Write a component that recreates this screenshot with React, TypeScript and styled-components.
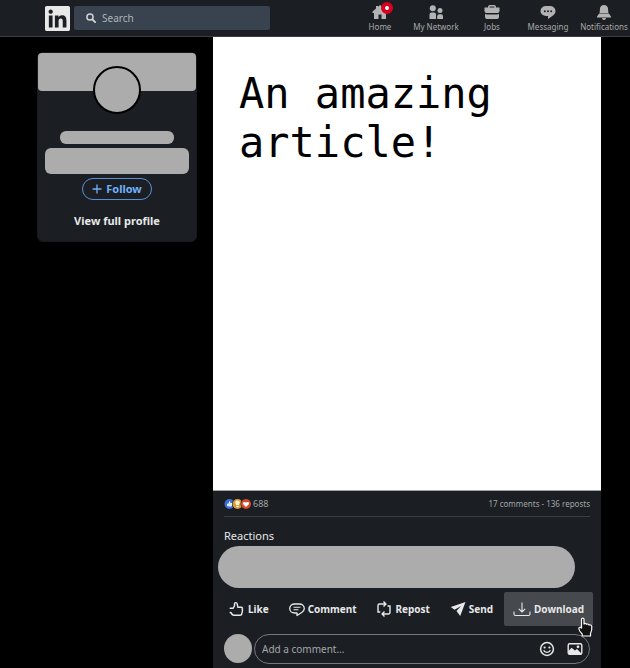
import React from "react";
import styled, { createGlobalStyle } from "styled-components";
import { FaLinkedin } from "react-icons/fa";

const GlobalStyle = createGlobalStyle`
  *, *::before, *::after { box-sizing: border-box; }
  body {
    margin: 0;
    background: #000;
    color: #e8e8e8;
    font-family: "Noto Sans", sans-serif;
    font-size: 10px;
    overflow-x: hidden;
  }
  button, input { font: inherit; color: inherit; }
  button { background: none; border: 0; padding: 0; cursor: pointer; }
  a { color: inherit; text-decoration: none; }
  h1, p { margin: 0; }
  svg { display: block; flex: none; }
`;

const Page = styled.div`
  min-height: 100vh;
  display: flex;
  flex-direction: column;
`;

const Header = styled.header`
  height: 37px;
  flex: none;
  display: flex;
  align-items: center;
  gap: 4px;
  padding-left: 45px;
  background: #1b1f23;
  border-bottom: 1px solid #3a3f43;
`;

const LogoLink = styled.a`
  color: #e9e9e9;
  svg { width: 25px; height: 29px; }
`;

const SearchBox = styled.label`
  display: flex;
  align-items: center;
  gap: 6px;
  width: 196px;
  height: 24px;
  padding: 0 12px;
  border-radius: 2px;
  background: #38434f;
  color: #d0d2d4;
`;

const SearchInput = styled.input`
  flex: 1;
  min-width: 0;
  padding: 0;
  border: 0;
  outline: 0;
  background: none;
  &::placeholder { color: #b0b4b8; opacity: 1; }
`;

const Nav = styled.nav`
  display: flex;
  flex: none;
  align-self: stretch;
  margin-left: auto;
  margin-right: -2px;
`;

const NavLink = styled.a`
  width: 56px;
  display: flex;
  flex-direction: column;
  align-items: center;
  padding-top: 4px;
  gap: 1px;
  font-size: 8px;
  line-height: 12px;
  color: #b3b3b3;
`;

const NavIcon = styled.span`
  position: relative;
`;

const NavLinkText = styled.span`
  white-space: nowrap;
  color: #a9a9a9;
`;

const Badge = styled.span`
  position: absolute;
  top: -2px;
  right: -5px;
  width: 12px;
  height: 12px;
  border: 4px solid #d9001f;
  border-radius: 50%;
  background: #fff;
`;

const Columns = styled.div`
  flex: 1;
  display: grid;
  grid-template-columns: 160px minmax(0, 1fr);
  gap: 16px;
  padding: 0 29px 0 37px;
`;

const ProfileCard = styled.aside`
  align-self: start;
  margin-top: 15px;
  display: flex;
  flex-direction: column;
  align-items: center;
  padding-bottom: 12px;
  border: 1px solid #17191c;
  border-radius: 6px;
  background: #1b1f23;
`;

const Cover = styled.div`
  align-self: stretch;
  height: 38px;
  border-radius: 4px;
  background: #acacac;
`;

const ProfilePhoto = styled.div`
  width: 48px;
  height: 48px;
  margin-top: -25px;
  border: 2px solid #000;
  border-radius: 50%;
  background: #acacac;
`;

const Placeholder = styled.div<{ $width: number; $height: number; $top: number }>`
  width: ${(p) => p.$width}px;
  height: ${(p) => p.$height}px;
  margin-top: ${(p) => p.$top}px;
  border-radius: 6px;
  background: #acacac;
`;

const FollowButton = styled.button`
  display: flex;
  align-items: center;
  justify-content: center;
  gap: 4px;
  width: 70px;
  height: 22px;
  margin-top: 4px;
  border: 1px solid #5a8fd6;
  border-radius: 11px;
  color: #71b0fb;
  font-size: 11px;
  font-weight: 700;
  line-height: 14px;
`;

const ProfileLink = styled.a`
  margin-top: 13px;
  font-size: 11px;
  font-weight: 700;
  line-height: 16px;
`;

const Post = styled.main`
  display: flex;
  flex-direction: column;
`;

const Article = styled.article`
  flex: 1;
  padding: 32px 26px;
  background: #fff;
  color: #000;
  border-bottom: 1px solid #9da3a3;
`;

const ArticleTitle = styled.h1`
  font: 400 42px/49px "DejaVu Sans Mono", monospace;
`;

const Social = styled.section`
  padding: 0 11px 4px;
  background: #1b1f23;
`;

const Counts = styled.div`
  display: flex;
  align-items: center;
  justify-content: space-between;
  height: 26px;
  border-bottom: 1px solid #3b3f43;
  font-size: 8px;
  color: #a0a3a5;
`;

const ReactionCount = styled.a`
  display: flex;
  align-items: center;
  gap: 1px;
  font-size: 9px;
`;

const ReactionsTitle = styled.p`
  margin-top: 11px;
  font-size: 11px;
  line-height: 16px;
`;

const ReactionStrip = styled.div`
  height: 42px;
  margin: 2px 15px 0 -6px;
  border-radius: 21px;
  background: #acacac;
`;

const Actions = styled.div`
  display: flex;
  justify-content: space-between;
  margin: 4px -3px 0 -4px;
`;

const ActionButton = styled.button<{ $active?: boolean }>`
  display: flex;
  align-items: center;
  gap: 3px;
  height: 34px;
  padding: 0 9px;
  border-radius: 2px;
  background: ${(p) => (p.$active ? "#46494d" : "transparent")};
  font-weight: 700;
`;

const ActiveAction = styled.div`
  position: relative;
`;

const Pointer = styled.svg`
  position: absolute;
  right: 0;
  bottom: -11px;
  pointer-events: none;
`;

const CommentRow = styled.div`
  display: flex;
  gap: 2px;
  margin-top: 8px;
`;

const Avatar = styled.div`
  width: 28px;
  height: 29px;
  border-radius: 50%;
  background: #acacac;
`;

const CommentBox = styled.div`
  flex: 1;
  min-width: 0;
  display: flex;
  align-items: center;
  gap: 12px;
  height: 30px;
  padding: 0 6px 0 7px;
  border: 1px solid #75787b;
  border-radius: 15px;
`;

const CommentInput = styled.input`
  flex: 1;
  min-width: 0;
  padding: 0;
  border: 0;
  outline: 0;
  background: none;
  &::placeholder { color: #a3a6a9; opacity: 1; }
`;

const HomeIcon = () => (
  <svg width="16" height="16" viewBox="0 0 16 16" fill="currentColor">
    <path d="M8 1 15.500 7.500V9H14v6h-4.500v-4.500h-3V15H2V9H.5V7.500L4 4.500V2h2v.8Z" />
  </svg>
);

const NetworkIcon = () => (
  <svg width="16" height="16" viewBox="0 0 16 16" fill="currentColor">
    <circle cx="4.800" cy="4.300" r="3" />
    <path d="M1.500 15v-4.500a2 2 0 0 1 2-2H6a2 2 0 0 1 2 2V15Z" />
    <circle cx="12" cy="6.600" r="2.500" />
    <path d="M9.200 15v-2.800a2 2 0 0 1 2-2H13a2 2 0 0 1 2 2V15Z" />
  </svg>
);

const JobsIcon = () => (
  <svg width="16" height="16" viewBox="0 0 16 16" fill="currentColor">
    <path fillRule="evenodd" d="M4 3.500V3a2 2 0 0 1 2-2h4a2 2 0 0 1 2 2v.5h3.500V7a2 2 0 0 1-2 2h-11a2 2 0 0 1-2-2V3.500Zm1.500 0h5V3a.6.6 0 0 0-.6-.6H6.100a.6.6 0 0 0-.6.6Z" />
    <path d="M1 9.800c.5.4 1 .6 1.700.6h10.600c.7 0 1.200-.2 1.700-.6V13a2 2 0 0 1-2 2H3a2 2 0 0 1-2-2Z" />
  </svg>
);

const MessagingIcon = () => (
  <svg width="16" height="16" viewBox="0 0 16 16">
    <path fill="currentColor" d="M6 2h4a5.500 5 0 0 1 5.500 5c0 2-1 3.300-2.500 4.500L8 15v-3H6A5.500 5 0 0 1 .5 7 5.500 5 0 0 1 6 2Z" />
    <g fill="#1b1f23">
      <circle cx="4.800" cy="7.300" r="1" />
      <circle cx="8" cy="7.300" r="1" />
      <circle cx="11.200" cy="7.300" r="1" />
    </g>
  </svg>
);

const BellIcon = () => (
  <svg width="16" height="16" viewBox="0 0 16 16" fill="currentColor">
    <path d="M8 1c2.300 0 3.800 1.400 4 3.500l.4 4.500H3.600L4 4.500C4.200 2.400 5.700 1 8 1ZM3.200 9.600h9.600l2.200 3v.9H1v-.9ZM6 14h4a2 2 0 0 1-4 0Z" />
  </svg>
);

const SearchIcon = () => (
  <svg width="10" height="10" viewBox="0 0 10 10" fill="none" stroke="currentColor">
    <circle cx="4" cy="4" r="3.100" strokeWidth="1.500" />
    <path d="m6.300 6.300 2.800 2.800" strokeWidth="1.900" strokeLinecap="round" />
  </svg>
);

const PlusIcon = () => (
  <svg width="10" height="10" viewBox="0 0 10 10" stroke="currentColor" strokeWidth="1.300">
    <path d="M5 .5v9M.5 5h9" />
  </svg>
);

const ReactionIcons = () => (
  <svg width="28" height="12" viewBox="0 0 28 12">
    <circle cx="5.500" cy="6" r="5" fill="#3c6fd4" />
    <path fill="#dcebff" d="M3 5.800h1.300L5.500 3c1 0 1.100.7.700 2h1.900c.6 0 .7.8.3 1.200.3.500.1.900-.2 1.100 0 .6-.3 1.200-1 1.200H5L3 8Z" />
    <circle cx="13.500" cy="6" r="5.500" fill="#1b1f23" />
    <circle cx="13.500" cy="6" r="5" fill="#d99a38" />
    <path fill="#fff0cc" d="M13.500 2.500c1.800 0 2.600 1.300 2.200 2.800-.2.700-.7 1-.8 1.700h-2.800c-.1-.7-.6-1-.8-1.700-.4-1.500.4-2.800 2.200-2.800Zm-1.200 5.200h2.400v1.500h-2.400Z" />
    <circle cx="22" cy="6" r="5.500" fill="#1b1f23" />
    <circle cx="22" cy="6" r="5" fill="#d6492a" />
    <path fill="#fff" d="M22 9 19.200 6.200c-1-1.200.2-2.700 1.600-2.200.6.2.9.5 1.200.8.3-.3.600-.6 1.200-.8 1.400-.5 2.600 1 1.600 2.200Z" />
  </svg>
);

const LikeIcon = () => (
  <svg width="16" height="16" viewBox="0 0 16 16" fill="none" stroke="currentColor" strokeWidth="1.400" strokeLinejoin="round" strokeLinecap="round">
    <path d="M1.200 7.200h3L5.500 5V2.800c0-1.600 2.300-1.600 2.700 0l.6 3.400h3.400c1.400 0 1.500 1.400.9 2 .7.700.6 1.600.1 2.100.3.700.1 1.300-.3 1.700 0 1.500-.8 2.200-2 2.200H5.200c-1.500 0-2.500-.8-2.800-2.200L1.200 11.500" />
  </svg>
);

const CommentIcon = () => (
  <svg width="16" height="16" viewBox="0 0 16 16" fill="none" stroke="currentColor" strokeWidth="1.300" strokeLinejoin="round">
    <path d="M5.700 3h4.600a5 4.500 0 0 1 5 4.500c0 2-1 3-2.600 4L8 14.500V12H5.700a5 4.500 0 0 1 0-9Z" />
    <path d="M4.500 6.300h7M4.500 8.800h5" strokeWidth="1.100" />
  </svg>
);

const RepostIcon = () => (
  <svg width="16" height="16" viewBox="0 0 16 16" fill="none" stroke="currentColor" strokeWidth="1.400">
    <path d="M2 11V4.500A1.500 1.500 0 0 1 3.500 3h6M7.500.6 9.900 3 7.500 5.400M1.300 11h3M14 5v6.500a1.500 1.500 0 0 1-1.500 1.500h-6M8.500 10.600 6.100 13l2.400 2.400M11.500 5h3.200" />
  </svg>
);

const SendIcon = () => (
  <svg width="16" height="16" viewBox="0 0 16 16" fill="currentColor">
    <path d="M15.500 1 .8 6l3.700 2.800L11 5 6.500 10l3.700 5Z" />
  </svg>
);

const DownloadIcon = () => (
  <svg width="18" height="16" viewBox="0 0 18 16" fill="none" stroke="currentColor" strokeWidth="1.100">
    <path d="M9 1.500V11M5.800 7.800 9 11l3.200-3.200M1 10.500V13a1.500 1.500 0 0 0 1.500 1.500h13A1.500 1.500 0 0 0 17 13v-2.500" />
  </svg>
);

const SmileIcon = () => (
  <svg width="16" height="16" viewBox="0 0 16 16">
    <circle cx="8" cy="8" r="6.400" fill="none" stroke="currentColor" strokeWidth="1.500" />
    <circle cx="5.600" cy="6.500" r="1.100" fill="currentColor" />
    <circle cx="10.400" cy="6.500" r="1.100" fill="currentColor" />
    <path d="M4.600 9.300c1.200 2.700 5.600 2.700 6.800 0" fill="none" stroke="currentColor" strokeWidth="1.300" />
  </svg>
);

const PhotoIcon = () => (
  <svg width="16" height="16" viewBox="0 0 16 16">
    <rect x="1.200" y="2.700" width="13.600" height="10.600" rx="1.500" fill="none" stroke="currentColor" strokeWidth="1.400" />
    <path d="m1.500 10 3-3.200L8 9.500l2-1.500 4.500 4.500v.8h-13Z" fill="currentColor" />
    <circle cx="11" cy="5.800" r="1.400" fill="currentColor" />
  </svg>
);

const navItems = [
  { label: "Home", Icon: HomeIcon, badge: true },
  { label: "My Network", Icon: NetworkIcon },
  { label: "Jobs", Icon: JobsIcon },
  { label: "Messaging", Icon: MessagingIcon },
  { label: "Notifications", Icon: BellIcon },
];

const actions = [
  { label: "Like", Icon: LikeIcon },
  { label: "Comment", Icon: CommentIcon },
  { label: "Repost", Icon: RepostIcon },
  { label: "Send", Icon: SendIcon },
];

export default function App() {
  return (
    <Page>
      <GlobalStyle />
      <Header>
        <LogoLink href="#" aria-label="LinkedIn"><FaLinkedin /></LogoLink>
        <SearchBox>
          <SearchIcon />
          <SearchInput type="search" placeholder="Search" aria-label="Search" />
        </SearchBox>
        <Nav>
          {navItems.map(({ label, Icon, badge }) => (
            <NavLink href="#" key={label}>
              <NavIcon>
                <Icon />
                {badge && <Badge />}
              </NavIcon>
              <NavLinkText>{label}</NavLinkText>
            </NavLink>
          ))}
        </Nav>
      </Header>
      <Columns>
        <ProfileCard>
          <Cover />
          <ProfilePhoto />
          <Placeholder $width={114} $height={13} $top={17} />
          <Placeholder $width={144} $height={26} $top={4} />
          <FollowButton><PlusIcon />Follow</FollowButton>
          <ProfileLink href="#">View full profile</ProfileLink>
        </ProfileCard>
        <Post>
          <Article>
            <ArticleTitle>An amazing article!</ArticleTitle>
          </Article>
          <Social>
            <Counts>
              <ReactionCount href="#"><ReactionIcons />688</ReactionCount>
              <a href="#">17 comments - 136 reposts</a>
            </Counts>
            <ReactionsTitle>Reactions</ReactionsTitle>
            <ReactionStrip />
            <Actions>
              {actions.map(({ label, Icon }) => (
                <ActionButton key={label}><Icon />{label}</ActionButton>
              ))}
              <ActiveAction>
                <ActionButton $active><DownloadIcon />Download</ActionButton>
                <Pointer width="15" height="20" viewBox="0 0 15 20">
                  <path
                    fill="#111"
                    stroke="#fff"
                    strokeWidth="1.200"
                    strokeLinejoin="round"
                    d="M3.500 11V2.200C3.500.7 6 .7 6 2.200V7c.7-.8 2-.7 2.500.3.800-.6 2-.3 2.400.6.900-.3 2.600 0 2.900 1.400.2 2.600 0 5-1.300 7.200V19H4.200v-2C2.500 15.500 1 13.500.8 11.500c0-1.500 1.700-1.700 2.700-.5Z"
                  />
                </Pointer>
              </ActiveAction>
            </Actions>
            <CommentRow>
              <Avatar />
              <CommentBox>
                <CommentInput type="text" placeholder="Add a comment..." aria-label="Add a comment" />
                <button aria-label="Add emoji"><SmileIcon /></button>
                <button aria-label="Add photo"><PhotoIcon /></button>
              </CommentBox>
            </CommentRow>
          </Social>
        </Post>
      </Columns>
    </Page>
  );
}
